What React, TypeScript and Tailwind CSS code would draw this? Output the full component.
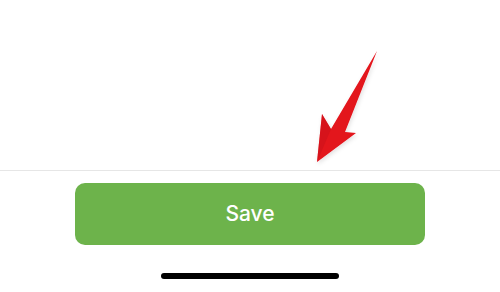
const Arrow = () => (
  <svg
    className="absolute left-0 top-0"
    width="500"
    height="171"
    viewBox="0 0 500 171"
  >
    <defs>
      <filter id="sh" x="-20%" y="-20%" width="140%" height="140%">
        <feDropShadow dx="1" dy="2" stdDeviation="2" floodColor="#000" floodOpacity="0.12" />
      </filter>
    </defs>
    <polygon
      points="317,162 322,114 331,129 377,51 345,132 356,133"
      fill="#e3131b"
      filter="url(#sh)"
    />
    <polygon points="317,162 322,114 331,129" fill="#c9101a" opacity="0.5" />
  </svg>
);

export default function App() {
  return (
    <div className="w-[500px] h-[292px] bg-white flex flex-col font-['Inter',sans-serif]">
      <div className="relative h-[171px] border-b border-[#e6e6e6]">
        <Arrow />
      </div>
      <div className="flex justify-center pt-[12px]">
        <button className="w-[350px] h-[62px] rounded-[10px] bg-[#6db34b] text-white text-[21px] font-medium">
          Save
        </button>
      </div>
      <div className="flex justify-center pt-[28px]">
        <div className="w-[178px] h-[6px] rounded-full bg-black" />
      </div>
    </div>
  );
}
